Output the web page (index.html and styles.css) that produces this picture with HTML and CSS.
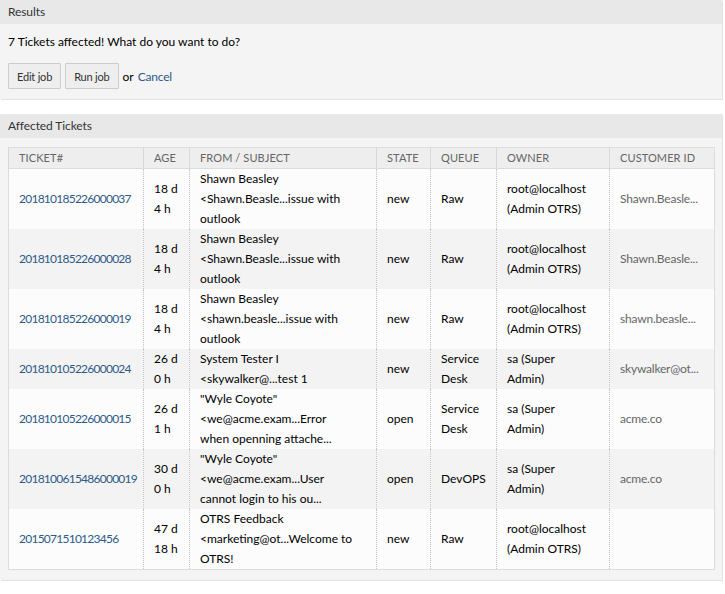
FILE: index.html
```html
<!DOCTYPE html>
<html>
<head>
<meta charset="utf-8">
<link rel="stylesheet" href="styles.css">
</head>
<body>
<div class="widget">
  <div class="widget-header">Results</div>
  <div class="widget-content">
    <p class="message">7 Tickets affected! What do you want to do?</p>
    <div class="actions">
      <button class="btn">Edit job</button>
      <button class="btn">Run job</button>
      <span class="or">or</span>
      <a class="link" href="#">Cancel</a>
    </div>
  </div>
</div>

<div class="widget">
  <div class="widget-header">Affected Tickets</div>
  <div class="widget-content table-wrap">
    <table class="tickets">
      <colgroup>
        <col class="c-ticket"><col class="c-age"><col class="c-from"><col class="c-state"><col class="c-queue"><col class="c-owner"><col class="c-cust">
      </colgroup>
      <thead>
        <tr><th>Ticket#</th><th>Age</th><th>From / Subject</th><th>State</th><th>Queue</th><th>Owner</th><th>Customer ID</th></tr>
      </thead>
      <tbody>
        <tr>
          <td><a class="link num" href="#">201810185226000037</a></td>
          <td>18 d<br>4 h</td>
          <td>Shawn Beasley<br>&lt;Shawn.Beasle...issue with<br>outlook</td>
          <td>new</td><td>Raw</td>
          <td>root@localhost<br>(Admin OTRS)</td>
          <td class="cust">Shawn.Beasle...</td>
        </tr>
        <tr>
          <td><a class="link num" href="#">201810185226000028</a></td>
          <td>18 d<br>4 h</td>
          <td>Shawn Beasley<br>&lt;Shawn.Beasle...issue with<br>outlook</td>
          <td>new</td><td>Raw</td>
          <td>root@localhost<br>(Admin OTRS)</td>
          <td class="cust">Shawn.Beasle...</td>
        </tr>
        <tr>
          <td><a class="link num" href="#">201810185226000019</a></td>
          <td>18 d<br>4 h</td>
          <td>Shawn Beasley<br>&lt;shawn.beasle...issue with<br>outlook</td>
          <td>new</td><td>Raw</td>
          <td>root@localhost<br>(Admin OTRS)</td>
          <td class="cust">shawn.beasle...</td>
        </tr>
        <tr>
          <td><a class="link num" href="#">201810105226000024</a></td>
          <td>26 d<br>0 h</td>
          <td>System Tester I<br>&lt;skywalker@...test 1</td>
          <td>new</td><td>Service<br>Desk</td>
          <td>sa (Super<br>Admin)</td>
          <td class="cust">skywalker@ot...</td>
        </tr>
        <tr>
          <td><a class="link num" href="#">201810105226000015</a></td>
          <td>26 d<br>1 h</td>
          <td>"Wyle Coyote"<br>&lt;we@acme.exam...Error<br>when openning attache...</td>
          <td>open</td><td>Service<br>Desk</td>
          <td>sa (Super<br>Admin)</td>
          <td class="cust">acme.co</td>
        </tr>
        <tr>
          <td><a class="link num" href="#">2018100615486000019</a></td>
          <td>30 d<br>0 h</td>
          <td>"Wyle Coyote"<br>&lt;we@acme.exam...User<br>cannot login to his ou...</td>
          <td>open</td><td>DevOPS</td>
          <td>sa (Super<br>Admin)</td>
          <td class="cust">acme.co</td>
        </tr>
        <tr>
          <td><a class="link num" href="#">2015071510123456</a></td>
          <td>47 d<br>18 h</td>
          <td>OTRS Feedback<br>&lt;marketing@ot...Welcome to<br>OTRS!</td>
          <td>new</td><td>Raw</td>
          <td>root@localhost<br>(Admin OTRS)</td>
          <td class="cust"></td>
        </tr>
      </tbody>
    </table>
  </div>
</div>
</body>
</html>
```

FILE: styles.css
```css
html, body {
  margin: 0;
  padding: 0;
  background: #ffffff;
}
body {
  font-family: Lato, "Liberation Sans", sans-serif;
  font-size: 12px;
  color: #000;
}
.widget {
  width: 722px;
  margin-bottom: 15px;
  background: #f4f4f4;
  box-shadow: 1px 1px 0 #e2e2e2;
}
.widget-header {
  height: 24px;
  line-height: 24px;
  padding: 0 8px;
  background: #e8e8e8;
  color: #333;
  font-size: 12px;
  letter-spacing: -0.1px;
}
.widget-content {
  padding: 8px 8px 10px;
}
.message {
  margin: 0;
  line-height: 20px;
  color: #000;
}
.actions {
  display: flex;
  align-items: center;
  gap: 4px;
  margin-top: 11px;
}
.btn {
  font-family: inherit;
  font-size: 11px;
  letter-spacing: -0.2px;
  color: #333;
  background: #eeeeee;
  border: 1px solid #cccccc;
  height: 26px;
  padding: 0 8px;
  border-radius: 1px;
}
.or {
  margin-left: 0;
}
.link {
  color: #2d5a88;
  text-decoration: none;
}
.actions .link {
  letter-spacing: -0.2px;
}
.table-wrap {
  padding: 9px 8px 10px;
}
.tickets {
  width: 706px;
  border-collapse: collapse;
  table-layout: fixed;
  border: 1px solid #dcdcdc;
}
.c-ticket { width: 135px; }
.c-age { width: 46px; }
.c-from { width: 187px; }
.c-state { width: 54px; }
.c-queue { width: 66px; }
.c-owner { width: 113px; }
.c-cust { width: 105px; }
.tickets th {
  background: #eeeeee;
  color: #666;
  font-weight: normal;
  font-size: 11px;
  text-transform: uppercase;
  letter-spacing: 0.1px;
  text-align: left;
  line-height: 20px;
  padding: 0 10px;
  border-left: 1px solid #d8d8d8;
  border-bottom: 1px solid #dcdcdc;
}
.tickets td {
  padding: 0 10px;
  line-height: 20px;
  vertical-align: middle;
  border-left: 1px dotted #c8c8c8;
  white-space: nowrap;
  overflow: hidden;
}
.tickets .num {
  letter-spacing: -0.75px;
}
.tickets tbody tr:nth-child(odd) td { background: #fcfcfc; }
.tickets tbody tr:nth-child(even) td { background: #f3f3f3; }
.tickets td.cust { color: #666; letter-spacing: -0.2px; }
```
